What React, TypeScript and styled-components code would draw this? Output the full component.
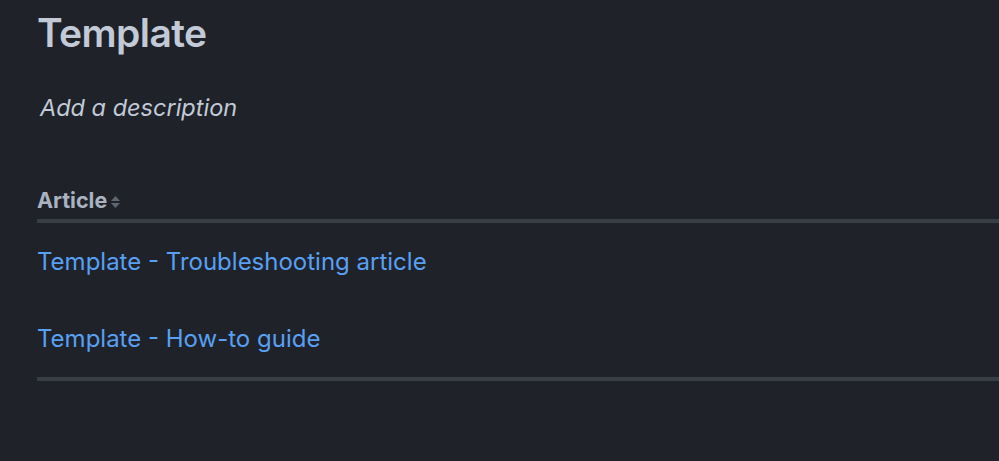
import React from 'react';
import styled, { createGlobalStyle } from 'styled-components';

const GlobalStyle = createGlobalStyle`
  html, body {
    margin: 0;
    padding: 0;
    background: #1f2228;
  }
  body {
    font-family: Inter, "Noto Sans", "Liberation Sans", sans-serif;
    -webkit-font-smoothing: antialiased;
  }
`;

const Page = styled.div`
  width: 999px;
  height: 461px;
  box-sizing: border-box;
  padding: 8px 0 0 37px;
  background: #1f2228;
  overflow: hidden;
`;

const Title = styled.h1`
  margin: 0;
  font-size: 39px;
  line-height: 50px;
  font-weight: 600;
  letter-spacing: -0.6px;
  color: #c2cad8;
`;

const Description = styled.p`
  margin: 35px 0 0 3px;
  font-size: 23.5px;
  line-height: 30px;
  font-style: italic;
  color: #c2cad8;
`;

const Table = styled.table`
  margin-top: 64px;
  width: calc(100% + 20px);
  border-collapse: collapse;
  border-bottom: 4px solid #393e46;
`;

const HeadCell = styled.th`
  text-align: left;
  padding: 0 0 6px;
  font-size: 21.5px;
  line-height: 26px;
  font-weight: 700;
  color: #aab3c1;
  border-bottom: 4px solid #393e46;
`;

const SortIcon = styled.svg`
  display: inline-block;
  width: 11px;
  height: 14px;
  margin-left: 3px;
  vertical-align: -1px;
`;

const Cell = styled.td`
  height: 77px;
  padding: 0;
  vertical-align: middle;
`;

const ArticleLink = styled.a`
  font-size: 24px;
  line-height: 30px;
  color: #58a0f4;
  text-decoration: none;
`;

const articles = ['Template - Troubleshooting article', 'Template - How-to guide'];

export default function App() {
  return (
    <>
      <GlobalStyle />
      <Page>
        <Title>Template</Title>
        <Description>Add a description</Description>
        <Table>
          <thead>
            <tr>
              <HeadCell>
                Article
                <SortIcon viewBox="0 0 11 14">
                  <path d="M5.5 1 L10 6 H1 Z" fill="#5f6672" />
                  <path d="M5.5 13 L10 8 H1 Z" fill="#5f6672" />
                </SortIcon>
              </HeadCell>
            </tr>
          </thead>
          <tbody>
            {articles.map((a) => (
              <tr key={a}>
                <Cell>
                  <ArticleLink href="#">{a}</ArticleLink>
                </Cell>
              </tr>
            ))}
          </tbody>
        </Table>
      </Page>
    </>
  );
}
